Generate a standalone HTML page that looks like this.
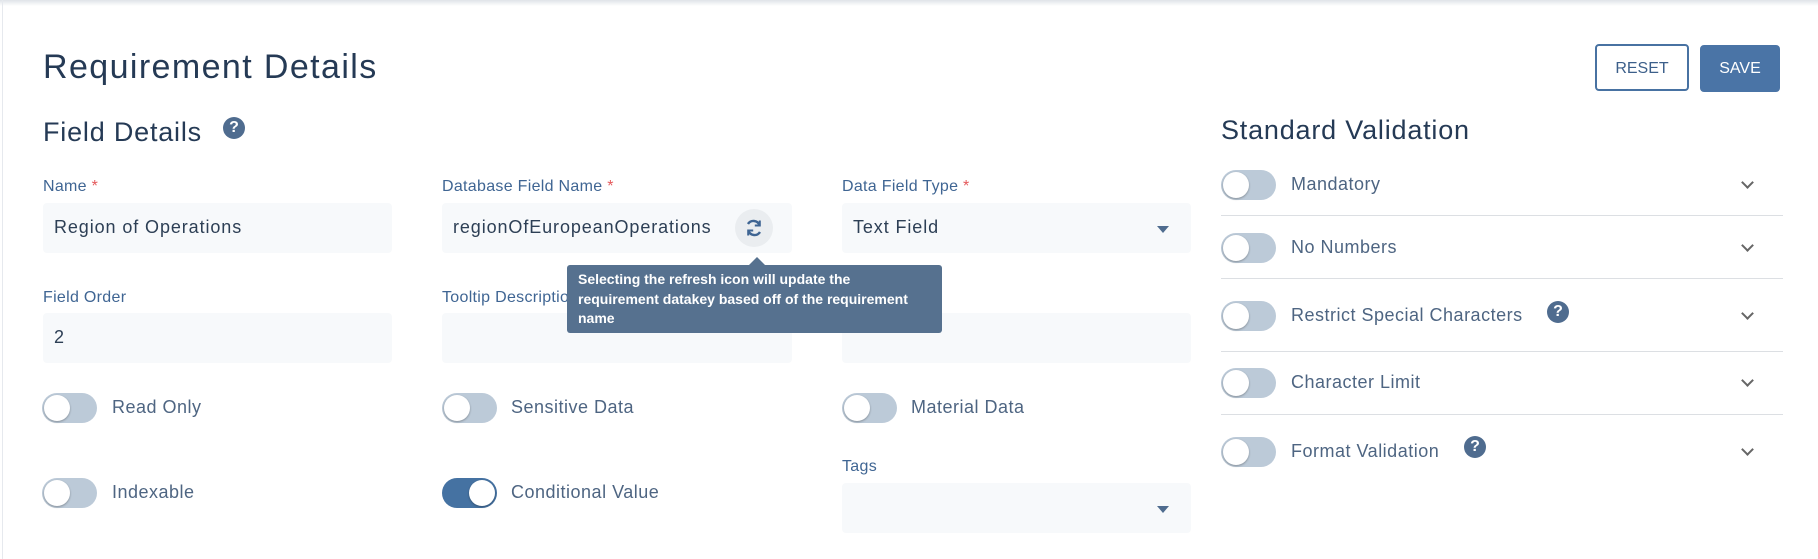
<!DOCTYPE html>
<html><head><meta charset="utf-8"><style>
*{box-sizing:border-box;margin:0;padding:0}
body{width:1818px;height:559px;background:#fff;font-family:"Liberation Sans",sans-serif;position:relative;overflow:hidden}
.abs{position:absolute}
.topbar{left:0;top:0;width:1818px;height:6px;background:linear-gradient(#dfe3e8,#fff)}
.lborder{left:2px;top:0;width:1px;height:559px;background:#e6e9ee}
h1{position:absolute;left:43px;top:48px;font-size:34px;letter-spacing:1.4px;font-weight:normal;color:#253a55}
h2{position:absolute;font-size:27px;letter-spacing:0.8px;font-weight:normal;color:#253a55}
.lbl{position:absolute;font-size:16px;letter-spacing:0.3px;color:#3f6593}
.lbl b{color:#e4585a;font-weight:normal}
.inp{position:absolute;height:50px;background:#f7f9fb;border-radius:4px;font-size:18px;letter-spacing:0.9px;color:#2d3f55;padding:14px 11px}
.q{position:absolute;width:22px;height:22px;border-radius:50%;background:#4f6c8f;color:#fff;font-size:16px;font-weight:bold;text-align:center;line-height:22px;letter-spacing:0}
.tg{position:absolute;width:55px;height:30px;border-radius:15px;background:#bccad8}
.tg::after{content:"";position:absolute;left:2px;top:2px;width:26px;height:26px;border-radius:50%;background:#fff;box-shadow:0 1px 2px rgba(0,0,0,.3)}
.tg.on{background:#4572a2}
.tg.on::after{left:27px}
.tl{position:absolute;font-size:18px;letter-spacing:0.5px;color:#4e6582}
.caret{position:absolute;width:0;height:0;border-left:6px solid transparent;border-right:6px solid transparent;border-top:7px solid #4f6c8f}
.chev{position:absolute;width:9px;height:9px;border-right:2px solid #666;border-bottom:2px solid #666;transform:rotate(45deg)}
.div{position:absolute;left:1221px;width:562px;height:1px;background:#dcdfe3}
.btn{position:absolute;height:47px;border-radius:4px;font-size:16px;text-align:center;line-height:45px}
</style></head><body>
<div class="abs topbar"></div><div class="abs lborder"></div>
<h1>Requirement Details</h1>
<div class="btn" style="left:1595px;top:44px;width:94px;border:2px solid #4872a2;color:#3c5f8a">RESET</div>
<div class="btn" style="left:1700px;top:45px;width:80px;background:#4a74a6;color:#fff;line-height:47px">SAVE</div>
<h2 style="left:43px;top:117px">Field Details</h2>
<div class="q" style="left:223px;top:117px">?</div>
<h2 style="left:1221px;top:115px">Standard Validation</h2>

<div class="lbl" style="left:43px;top:178px">Name <b>*</b></div>
<div class="inp" style="left:43px;top:203px;width:349px">Region of Operations</div>
<div class="lbl" style="left:442px;top:178px">Database Field Name <b>*</b></div>
<div class="inp" style="left:442px;top:203px;width:350px">regionOfEuropeanOperations</div>
<div class="abs" style="left:735px;top:209px;width:38px;height:38px;border-radius:50%;background:#eaedf0"></div>
<svg class="abs" style="left:744px;top:218px" width="20" height="20" viewBox="0 0 20 20" fill="none" stroke="#3f6593" stroke-width="2.4"><path d="M15.5 7A6.5 6.5 0 0 0 4 6"/><path d="M4.5 13A6.5 6.5 0 0 0 16 14"/><path d="M15.8 2.5v5h-5" stroke-width="2"/><path d="M4.2 17.5v-5h5" stroke-width="2"/></svg>
<div class="lbl" style="left:842px;top:178px">Data Field Type <b>*</b></div>
<div class="inp" style="left:842px;top:203px;width:349px">Text Field</div>
<div class="caret" style="left:1157px;top:226px"></div>

<div class="lbl" style="left:43px;top:289px">Field Order</div>
<div class="inp" style="left:43px;top:313px;width:349px">2</div>
<div class="lbl" style="left:442px;top:289px">Tooltip Description</div>
<div class="inp" style="left:442px;top:313px;width:350px"></div>
<div class="lbl" style="left:842px;top:289px">Tooltip Title</div>
<div class="inp" style="left:842px;top:313px;width:349px"></div>

<div class="tg" style="left:42px;top:393px"></div><div class="tl" style="left:112px;top:397px">Read Only</div>
<div class="tg" style="left:442px;top:393px"></div><div class="tl" style="left:511px;top:397px">Sensitive Data</div>
<div class="tg" style="left:842px;top:393px"></div><div class="tl" style="left:911px;top:397px">Material Data</div>
<div class="tg" style="left:42px;top:478px"></div><div class="tl" style="left:112px;top:482px">Indexable</div>
<div class="tg on" style="left:442px;top:478px"></div><div class="tl" style="left:511px;top:482px">Conditional Value</div>
<div class="lbl" style="left:842px;top:458px">Tags</div>
<div class="inp" style="left:842px;top:483px;width:349px"></div>
<div class="caret" style="left:1157px;top:506px"></div>

<div class="abs" style="left:749px;top:257px;width:0;height:0;border-left:8px solid transparent;border-right:8px solid transparent;border-bottom:8px solid #56718f"></div>
<div class="abs" style="left:567px;top:265px;width:375px;height:68px;background:#56718f;border-radius:3px;color:#fff;font-size:14px;font-weight:bold;line-height:19.5px;padding:5px 11px;white-space:nowrap">Selecting the refresh icon will update the<br>requirement datakey based off of the requirement<br>name</div>

<div class="tg" style="left:1221px;top:170px"></div><div class="tl" style="left:1291px;top:174px">Mandatory</div><div class="chev" style="left:1743px;top:178px"></div>
<div class="div" style="top:215px"></div>
<div class="tg" style="left:1221px;top:233px"></div><div class="tl" style="left:1291px;top:237px">No Numbers</div><div class="chev" style="left:1743px;top:241px"></div>
<div class="div" style="top:278px"></div>
<div class="tg" style="left:1221px;top:301px"></div><div class="tl" style="left:1291px;top:305px">Restrict Special Characters</div><div class="q" style="left:1547px;top:301px">?</div><div class="chev" style="left:1743px;top:309px"></div>
<div class="div" style="top:351px"></div>
<div class="tg" style="left:1221px;top:368px"></div><div class="tl" style="left:1291px;top:372px">Character Limit</div><div class="chev" style="left:1743px;top:376px"></div>
<div class="div" style="top:414px"></div>
<div class="tg" style="left:1221px;top:437px"></div><div class="tl" style="left:1291px;top:441px">Format Validation</div><div class="q" style="left:1464px;top:436px">?</div><div class="chev" style="left:1743px;top:445px"></div>
</body></html>
